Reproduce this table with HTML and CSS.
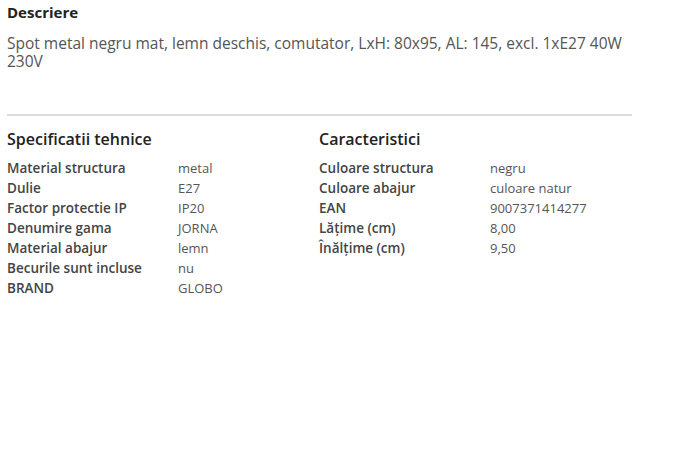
FILE: index.html
```html
<!DOCTYPE html>
<html lang="ro">
<head>
<meta charset="utf-8">
<link rel="stylesheet" href="styles.css">
</head>
<body>
<div class="page">
  <section class="desc">
    <h2 class="desc-title">Descriere</h2>
    <p class="desc-text">Spot metal negru mat, lemn deschis, comutator, LxH: 80x95, AL: 145, excl. 1xE27 40W 230V</p>
  </section>
  <div class="divider"></div>
  <div class="specs">
    <section class="spec-col">
      <h3 class="spec-title">Specificatii tehnice</h3>
      <div class="spec-table">
        <div class="label">Material structura</div><div class="value">metal</div>
        <div class="label">Dulie</div><div class="value">E27</div>
        <div class="label">Factor protectie IP</div><div class="value">IP20</div>
        <div class="label">Denumire gama</div><div class="value">JORNA</div>
        <div class="label">Material abajur</div><div class="value">lemn</div>
        <div class="label">Becurile sunt incluse</div><div class="value">nu</div>
        <div class="label">BRAND</div><div class="value">GLOBO</div>
      </div>
    </section>
    <section class="spec-col">
      <h3 class="spec-title">Caracteristici</h3>
      <div class="spec-table">
        <div class="label">Culoare structura</div><div class="value">negru</div>
        <div class="label">Culoare abajur</div><div class="value">culoare natur</div>
        <div class="label">EAN</div><div class="value">9007371414277</div>
        <div class="label">Lăţime (cm)</div><div class="value">8,00</div>
        <div class="label">Înălţime (cm)</div><div class="value">9,50</div>
      </div>
    </section>
  </div>
</div>
</body>
</html>
```

FILE: styles.css
```css
html, body {
  margin: 0;
  padding: 0;
  background: #fff;
}
body {
  font-family: "Open Sans", "Liberation Sans", sans-serif;
  color: #444;
}
.page {
  width: 625px;
  padding: 2px 0 0 7px;
}
.desc-title {
  margin: 0;
  font-size: 15px;
  font-weight: 700;
  line-height: 20px;
  color: #222;
}
.desc-text {
  margin: 12px 0 0;
  font-size: 15.5px;
  line-height: 18px;
  color: #555;
}
.divider {
  margin-top: 44px;
  height: 2px;
  background: #ddd;
}
.specs {
  display: grid;
  grid-template-columns: 312px 1fr;
}
.spec-title {
  margin: 12px 0 0;
  font-size: 16px;
  font-weight: 600;
  line-height: 22px;
  color: #222;
}
.spec-table {
  margin-top: 8px;
  display: grid;
  grid-template-columns: 171px 1fr;
  grid-auto-rows: 20px;
  font-size: 13px;
  line-height: 20px;
}
.label {
  font-size: 13.5px;
  font-weight: 600;
  color: #444;
}
.value {
  color: #555;
}
```
